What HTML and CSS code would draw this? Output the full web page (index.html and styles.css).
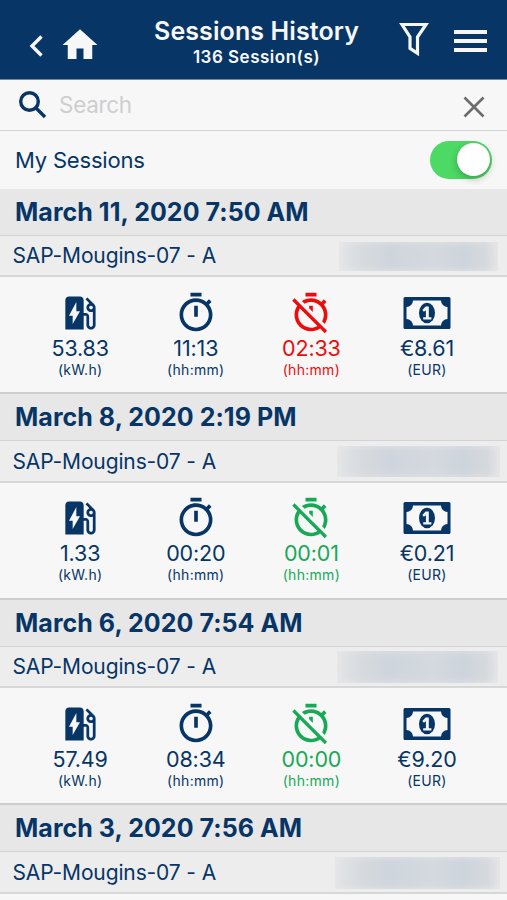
FILE: index.html
```html
<!DOCTYPE html>
<html lang="en">
<head>
<meta charset="utf-8">
<title>Sessions History</title>
<link rel="stylesheet" href="styles.css">
</head>
<body>
<svg class="defs" aria-hidden="true">
  <symbol id="station" viewBox="0 0 24 24"><path d="M19.77 7.23l.01-.01-3.72-3.72L15 4.56l2.11 2.11c-.94.36-1.61 1.26-1.61 2.33 0 1.38 1.12 2.5 2.5 2.5.36 0 .69-.08 1-.21v7.21c0 .55-.45 1-1 1s-1-.45-1-1V14c0-1.1-.9-2-2-2h-1V5c0-1.1-.9-2-2-2H6c-1.1 0-2 .9-2 2v16h10v-7.5h1.5v5c0 1.38 1.12 2.5 2.5 2.5s2.5-1.12 2.5-2.5V9c0-.69-.28-1.32-.73-1.77zM18 10c-.55 0-1-.45-1-1s.45-1 1-1 1 .45 1 1-.45 1-1 1zM8 18v-4.5H6L10 6v5h2l-4 7z"/></symbol>
  <symbol id="timer" viewBox="0 0 24 24"><path d="M15 1H9v2h6V1zm-4 13h2V8h-2v6zm8.030-6.610l1.420-1.420c-.43-.51-.9-.99-1.410-1.410l-1.420 1.420C16.070 4.740 14.120 4 12 4c-4.970 0-9 4.030-9 9s4.020 9 9 9 9-4.030 9-9c0-2.120-.74-4.070-1.970-5.610zM12 20c-3.870 0-7-3.130-7-7s3.130-7 7-7 7 3.130 7 7-3.130 7-7 7z"/></symbol>
  <symbol id="timer-off" viewBox="0 0 24 24"><path d="M19.04 4.55l-1.42 1.42C16.07 4.74 14.12 4 12 4c-1.83 0-3.53.55-4.95 1.48l1.46 1.46C9.53 6.35 10.73 6 12 6c3.87 0 7 3.13 7 7 0 1.27-.35 2.47-.94 3.49l1.45 1.45C20.45 16.53 21 14.83 21 13c0-2.12-.74-4.07-1.97-5.61l1.42-1.42-1.41-1.42zM15 1H9v2h6V1zm-4 8.44l2 2V8h-2v1.44zM3.02 4L1.75 5.27 4.5 8.03C3.55 9.45 3 11.16 3 13c0 4.97 4.02 9 9 9 1.84 0 3.55-.55 4.98-1.5l2.5 2.5 1.27-1.27-7.71-7.71L3.02 4zM12 20c-3.87 0-7-3.13-7-7 0-1.28.35-2.48.95-3.52l9.56 9.56c-1.03.61-2.23.96-3.51.96z"/></symbol>
  <symbol id="money" viewBox="0 0 48 44"><path fill-rule="evenodd" d="M2 6h44q1.500 0 1.500 1.500v29q0 1.500-1.500 1.500H2Q.5 38 .5 36.500v-29Q.5 6 2 6zM10 9.500a6.500 6.500 0 0 1-6.500 6.500v12a6.500 6.500 0 0 1 6.500 6.500h28a6.500 6.500 0 0 1 6.500-6.500V16A6.500 6.500 0 0 1 38 9.500z"/><ellipse cx="24" cy="22" rx="8" ry="10.300"/><path class="cut" d="M22.600 15.500h3.200v10.700h2.600v2.300h-8.200v-2.300h2.700v-7l-2 1.500-1.500-1.800z"/></symbol>
</svg>

<header class="topbar">
  <svg class="back" viewBox="0 0 14 22"><path d="M12.500 1.500L3 11l9.500 9.500"/></svg>
  <svg class="home" viewBox="0 0 24 24"><path d="M10 20v-6h4v6h5v-8h3L12 3 2 12h3v8z"/></svg>
  <div class="titles">
    <h1>Sessions History</h1>
    <p>136 Session(s)</p>
  </div>
  <svg class="filter" viewBox="0 0 30 34"><path d="M3 2.500h24l-8.500 12.500v16.300l-7.500-5V15z"/></svg>
  <div class="menu"><i></i><i></i><i></i></div>
</header>

<div class="search">
  <svg class="lens" viewBox="0 0 28 28"><circle cx="10.500" cy="10.500" r="8.800"/><path d="M17 17l9 9"/></svg>
  <span>Search</span>
  <svg class="clear" viewBox="0 0 22 22"><path d="M1.500 1.500l19 19M20.500 1.500l-19 19"/></svg>
</div>

<div class="mine">
  <span>My Sessions</span>
  <div class="toggle"><b></b></div>
</div>

<main>
  <section class="session">
    <h2>March 11, 2020 7:50 AM</h2>
    <div class="station"><span>SAP-Mougins-07 - A</span><div class="redacted"></div></div>
    <div class="stats">
      <div class="stat"><svg><use href="#station"/></svg><strong>53.83</strong><small>(kW.h)</small></div>
      <div class="stat"><svg><use href="#timer"/></svg><strong>11:13</strong><small>(hh:mm)</small></div>
      <div class="stat bad"><svg><use href="#timer-off"/></svg><strong>02:33</strong><small>(hh:mm)</small></div>
      <div class="stat"><svg class="bill"><use href="#money"/></svg><strong>€8.61</strong><small>(EUR)</small></div>
    </div>
  </section>
  <section class="session">
    <h2>March 8, 2020 2:19 PM</h2>
    <div class="station"><span>SAP-Mougins-07 - A</span><div class="redacted second"></div></div>
    <div class="stats">
      <div class="stat"><svg><use href="#station"/></svg><strong>1.33</strong><small>(kW.h)</small></div>
      <div class="stat"><svg><use href="#timer"/></svg><strong>00:20</strong><small>(hh:mm)</small></div>
      <div class="stat good"><svg><use href="#timer-off"/></svg><strong>00:01</strong><small>(hh:mm)</small></div>
      <div class="stat"><svg class="bill"><use href="#money"/></svg><strong>€0.21</strong><small>(EUR)</small></div>
    </div>
  </section>
  <section class="session">
    <h2>March 6, 2020 7:54 AM</h2>
    <div class="station"><span>SAP-Mougins-07 - A</span><div class="redacted third"></div></div>
    <div class="stats">
      <div class="stat"><svg><use href="#station"/></svg><strong>57.49</strong><small>(kW.h)</small></div>
      <div class="stat"><svg><use href="#timer"/></svg><strong>08:34</strong><small>(hh:mm)</small></div>
      <div class="stat good"><svg><use href="#timer-off"/></svg><strong>00:00</strong><small>(hh:mm)</small></div>
      <div class="stat"><svg class="bill"><use href="#money"/></svg><strong>€9.20</strong><small>(EUR)</small></div>
    </div>
  </section>
  <section class="session last">
    <h2>March 3, 2020 7:56 AM</h2>
    <div class="station"><span>SAP-Mougins-07 - A</span><div class="redacted fourth"></div></div>
  </section>
</main>
</body>
</html>
```
FILE: styles.css
```css
* { box-sizing: border-box; }
body {
  margin: 0;
  background: #f7f7f7;
  color: #063566;
  font-family: Inter, "Liberation Sans", sans-serif;
}
h1, h2, p { margin: 0; }
svg { display: block; flex: none; }
.defs { display: none; }

.topbar {
  display: flex;
  height: 80px;
  background: #063566;
  border-bottom: 1px solid #6f88a5;
  color: #f7f7f7;
}
.back { width: 14px; height: 22px; margin: 35px 0 0 29px; fill: none; stroke: #f7f7f7; stroke-width: 3.4; }
.home { width: 42px; height: 42px; margin: 24px 0 0 16px; fill: #f7f7f7; }
.titles { width: 220px; margin: 15px 0 0 45.500px; text-align: center; white-space: nowrap; }
h1 { font-size: 25px; line-height: 32px; font-weight: 600; letter-spacing: .1px; }
.titles p { font-size: 17px; line-height: 20px; font-weight: 600; letter-spacing: .5px; }
.filter { width: 30px; height: 34px; margin: 22px 0 0 32px; fill: none; stroke: #f7f7f7; stroke-width: 3.2; }
.menu { width: 33px; height: 22px; margin: 30px 0 0 25.500px; display: flex; flex-direction: column; justify-content: space-between; }
.menu i { height: 4px; background: #f7f7f7; }

.search { display: flex; align-items: center; height: 51px; padding: 0 22px 0 19px; border-bottom: 1px solid #d2d2d2; }
.lens { width: 28px; height: 28px; fill: none; stroke: #063566; stroke-width: 3.4; }
.search span { flex: 1; margin: -1px 0 0 12px; font-size: 22.500px; letter-spacing: -.3px; color: #cecece; }
.clear { width: 22px; height: 22px; margin-top: 4px; fill: none; stroke: #6c6c6c; stroke-width: 2.6; }

.mine { display: flex; align-items: center; justify-content: space-between; height: 57.500px; padding: 0 15px 0 15px; font-size: 22px; letter-spacing: -.2px; }
.toggle { display: flex; justify-content: flex-end; width: 62px; height: 38px; padding: 2.500px 2px; border-radius: 20px; background: #4cd964; }
.toggle b { width: 33px; height: 33px; border-radius: 50%; background: #fff; box-shadow: 0 3px 7px rgba(0, 0, 0, .25); }

.session { height: 205.600px; }
.last { height: 89px; }
.session h2 {
  height: 47px;
  padding-left: 15px;
  background: #e7e7e7;
  border-bottom: 1px solid #d3d3d3;
  font-size: 25px;
  line-height: 47.500px;
  font-weight: 700;
  letter-spacing: .05px;
  white-space: nowrap;
}
.station {
  display: flex;
  align-items: center;
  height: 41.500px;
  padding-left: 12.500px;
  background: #ededed;
  border-bottom: 2px solid #d7d7d7;
  font-size: 21px;
  letter-spacing: -.13px;
  white-space: nowrap;
}
.station span { padding-top: 1px; }
.redacted {
  width: 159px;
  height: 29px;
  margin: 2px 9px 0 auto;
  background: linear-gradient(90deg, #e3e5e7, #d6dade 16%, #cfd5dd 32%, #d4d9df 60%, #cdd4dc 78%, #d5d9dd 92%, #e2e4e6);
  box-shadow: inset 0 0 8px rgba(232, 233, 234, .8);
}
.second { width: 163px; height: 31px; margin-right: 7px; }
.third { width: 161px; height: 32px; }
.fourth { width: 165px; height: 32px; margin-right: 7px; }
.stats {
  display: grid;
  grid-template-columns: repeat(4, 115.600px);
  height: 117.100px;
  padding-left: 22.400px;
  padding-top: 13.500px;
  border-bottom: 2px solid #cecece;
}
.stat { display: flex; flex-direction: column; align-items: center; fill: currentColor; }
.stat svg { width: 44px; height: 44px; }
.stat .bill { width: 48px; }
.cut { fill: #f7f7f7; }
.stat strong { font-size: 21.500px; line-height: 26px; font-weight: 400; letter-spacing: -.15px; }
.stat small { font-size: 14px; line-height: 17px; letter-spacing: .3px; }
.bad { color: #ed0c0c; }
.good { color: #18a957; }
```
